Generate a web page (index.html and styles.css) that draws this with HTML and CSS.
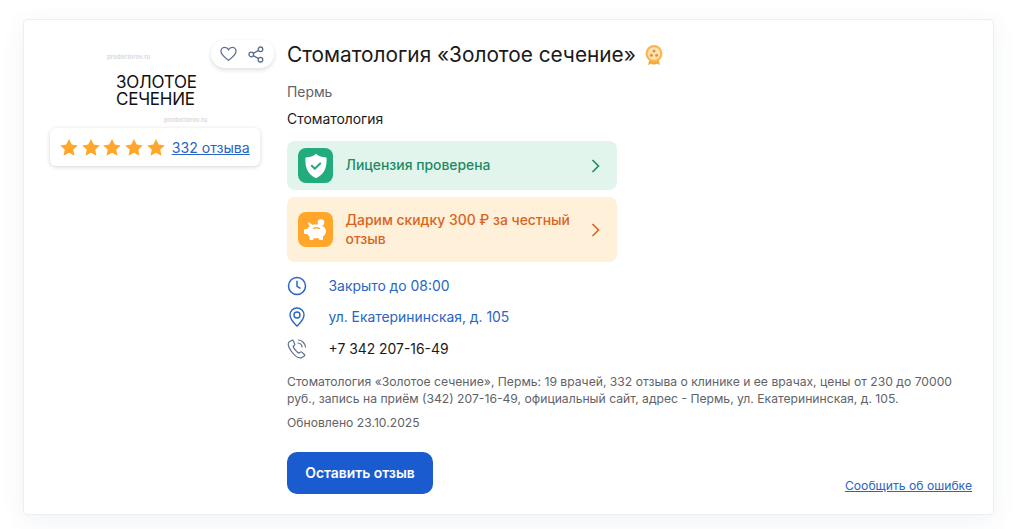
FILE: index.html
```html
<!DOCTYPE html>
<html lang="ru">
<head>
<meta charset="utf-8">
<title>Стоматология «Золотое сечение»</title>
<link rel="stylesheet" href="styles.css">
</head>
<body>
<main class="card">
  <aside class="side">
    <div class="logo">
      <span class="mark mark-top">prodoctorov.ru</span>
      <div class="logo-name">ЗОЛОТОЕ<br>СЕЧЕНИЕ</div>
      <span class="mark mark-bottom">prodoctorov.ru</span>
      <div class="actions">
        <svg width="17" height="16" viewBox="0 0 18 16" fill="none" stroke="#5b6f8f" stroke-width="1.300"><path d="M9 14.600C6.500 12.600 1 9.400 1 5.200 1 2.800 2.800 1 5 1c1.700 0 3.200 .9 4 2.400C9.800 1.900 11.300 1 13 1c2.200 0 4 1.800 4 4.200 0 4.200-5.500 7.400-8 9.400z"/></svg>
        <svg width="16" height="17" viewBox="0 0 16 17" fill="none" stroke="#5b6f8f" stroke-width="1.300"><circle cx="12.500" cy="3.300" r="2.300"/><circle cx="3.300" cy="8.500" r="2.300"/><circle cx="12.500" cy="13.700" r="2.300"/><path d="M5.300 7.400l5.200-3M5.300 9.600l5.200 3"/></svg>
      </div>
    </div>
    <div class="rating">
      <div class="stars">
        <svg width="18" height="17" viewBox="0 0 18 17"><path class="star" d="M9 0l2.700 5.600 6.100.8-4.500 4.200 1.100 6.100L9 13.800l-5.400 2.900 1.100-6.100L.2 6.400l6.100-.8z"/></svg>
        <svg width="18" height="17" viewBox="0 0 18 17"><path class="star" d="M9 0l2.700 5.600 6.100.8-4.500 4.200 1.100 6.100L9 13.800l-5.400 2.900 1.100-6.100L.2 6.400l6.100-.8z"/></svg>
        <svg width="18" height="17" viewBox="0 0 18 17"><path class="star" d="M9 0l2.700 5.600 6.100.8-4.500 4.200 1.100 6.100L9 13.800l-5.400 2.900 1.100-6.100L.2 6.400l6.100-.8z"/></svg>
        <svg width="18" height="17" viewBox="0 0 18 17"><path class="star" d="M9 0l2.700 5.600 6.100.8-4.500 4.200 1.100 6.100L9 13.800l-5.400 2.900 1.100-6.100L.2 6.400l6.100-.8z"/></svg>
        <svg width="18" height="17" viewBox="0 0 18 17"><path class="star" d="M9 0l2.700 5.600 6.100.8-4.500 4.200 1.100 6.100L9 13.800l-5.400 2.900 1.100-6.100L.2 6.400l6.100-.8z"/></svg>
      </div>
      <a class="reviews" href="#">332 отзыва</a>
    </div>
  </aside>
  <section class="info">
    <div class="title-row">
      <h1 class="title">Стоматология «Золотое сечение»</h1>
      <svg width="18" height="22" viewBox="0 0 18 22"><path d="M4.500 15l-1.500 6 3-1.300 3 1 3-1 3 1.300-1.500-6z" fill="#fba936"/><circle cx="9" cy="9.500" r="8.500" fill="#fcb650"/><circle cx="9" cy="9.500" r="6.300" fill="#fde2b8"/><circle cx="9" cy="7" r="1.500" fill="#e9912a"/><circle cx="6.400" cy="11.200" r="1.500" fill="#e9912a"/><circle cx="11.600" cy="11.200" r="1.500" fill="#e9912a"/></svg>
    </div>
    <div class="city">Пермь</div>
    <div class="spec">Стоматология</div>
    <a class="banner banner-green" href="#">
      <span class="badge badge-green">
        <svg width="24" height="26" viewBox="0 0 24 26"><path d="M12 .8c1.500 1.800 5 3.400 10.500 3.700.6 9.500-1.500 16.500-10.500 20.700C3 21 .9 14 1.500 4.500 7 4.200 10.500 2.600 12 .8z" fill="#fff"/><path d="M7.800 12.800l3 3 5.400-5.300" fill="none" stroke="#22ab7c" stroke-width="2" stroke-linecap="round" stroke-linejoin="round"/></svg>
      </span>
      <span class="banner-text">Лицензия проверена</span>
      <svg class="chev" width="9" height="14" viewBox="0 0 9 14" fill="none" stroke="#1c8a65" stroke-width="1.600"><path d="M1.500 1l6 6-6 6"/></svg>
    </a>
    <a class="banner banner-orange" href="#">
      <span class="badge badge-orange">
        <svg width="25" height="22" viewBox="0 0 25 22"><circle cx="18" cy="3.500" r="3.300" fill="#fff"/><path d="M5 3l4.500 2.700c1-.2 2.300-.4 3.500-.4 5.600 0 10 3 10 7 0 2.300-1.300 4-3 5.100V20a1 1 0 0 1-1 1h-2a1 1 0 0 1-1-1v-.8h-5.500v.8a1 1 0 0 1-1 1H7.500a1 1 0 0 1-1-1v-2.500c-1-.7-1.700-1.500-2.300-2.500H2a1 1 0 0 1-1-1v-3a1 1 0 0 1 1-1h2.200c.5-.9 1.200-1.700 2-2.400z" fill="#fff"/><path d="M10.500 9.300c1.900-.7 4-.7 6 0" stroke="#ffa62b" stroke-width="1.400" fill="none" stroke-linecap="round"/></svg>
      </span>
      <span class="banner-text">Дарим скидку 300 ₽ за честный отзыв</span>
      <svg class="chev" width="9" height="14" viewBox="0 0 9 14" fill="none" stroke="#d9641c" stroke-width="1.600"><path d="M1.500 1l6 6-6 6"/></svg>
    </a>
    <ul class="contacts">
      <li class="contact">
        <svg class="c-icon" width="20" height="20" viewBox="0 0 20 20" fill="none" stroke="#2a64c4" stroke-width="1.500" stroke-linecap="round" stroke-linejoin="round"><circle cx="10" cy="10" r="8.500"/><path d="M10 5.300v5l3 1.800"/></svg>
        <a class="c-link" href="#">Закрыто до 08:00</a>
      </li>
      <li class="contact">
        <svg class="c-icon" width="20" height="20" viewBox="0 0 20 20" fill="none" stroke="#2a64c4" stroke-width="1.400"><path d="M10 19c-1.500-1.500-7-6.100-7-11a7 7 0 0 1 14 0c0 4.900-5.500 9.500-7 11z"/><circle cx="10" cy="8" r="3"/></svg>
        <a class="c-link" href="#">ул. Екатерининская, д. 105</a>
      </li>
      <li class="contact">
        <svg class="c-icon" width="20" height="20" viewBox="0 0 20 20" fill="none" stroke="#5b6f8f" stroke-width="1.200" stroke-linecap="round" stroke-linejoin="round"><path d="M4.500 1.500L2 3C.8 4.500 1.300 8 4.500 12.500c3.500 4.700 7.500 7 10 6.300l2.800-1.800c.5-.5.5-1 .1-1.500l-2.600-2.400c-.5-.4-1-.4-1.500 0l-1.300 1c-1.500-.4-5.500-4.800-5.800-6.800l1.200-1.100c.5-.5.500-1 .2-1.500L6.200 1.700c-.5-.5-1.100-.6-1.700-.2z"/><path d="M11 4c2 .2 3.800 1.900 4 4M11.500 1c3.500.3 6.600 3.400 7 7"/></svg>
        <span class="c-phone">+7 342 207-16-49</span>
      </li>
    </ul>
    <p class="desc">Стоматология «Золотое сечение», Пермь: 19 врачей, 332 отзыва о клинике и ее врачах, цены от 230 до 70000 руб., запись на приём (342) 207-16-49, официальный сайт, адрес - Пермь, ул. Екатерининская, д. 105.</p>
    <p class="updated">Обновлено 23.10.2025</p>
    <div class="footer">
      <a class="btn" href="#">Оставить отзыв</a>
      <a class="report" href="#">Сообщить об ошибке</a>
    </div>
  </section>
</main>
</body>
</html>
```
FILE: styles.css
```css
* { box-sizing: border-box; }
html, body { margin: 0; height: 529px; overflow: hidden; }
body {
  background: #fff;
  font-family: Inter, "Noto Sans", sans-serif;
  color: #1a1a1a;
  padding: 19px 30px 0 23px;
}
a { text-decoration: none; }
.card {
  display: flex;
  width: 971px;
  height: 496px;
  background: #fff;
  border: 1px solid #eceef1;
  border-radius: 4px;
  box-shadow: 0 6px 24px rgba(60, 85, 110, .07);
  padding: 20px 21px 20px 26px;
}
.side { width: 210px; margin-right: 27px; flex: none; }
.logo { position: relative; height: 88px; }
.logo-name {
  position: absolute; left: 66px; top: 33.500px;
  font-size: 17px; line-height: 17.500px; letter-spacing: -.25px; color: #111;
  font-weight: 400;
}
.mark { position: absolute; font-size: 6px; line-height: 8px; color: #d5d7da; font-weight: 600; white-space: nowrap; }
.mark-top { left: 57px; top: 13px; }
.mark-bottom { left: 114px; top: 76px; }
.actions {
  position: absolute; left: 161px; top: 0;
  width: 63px; height: 28px;
  display: flex; align-items: center; gap: 11px; padding-left: 9px;
  background: #fff; border-radius: 14px;
  box-shadow: 0 2px 4px rgba(40, 50, 70, .16);
}
.rating {
  display: flex; align-items: center; gap: 7px;
  height: 38px; padding-left: 10px;
  background: #fff; border-radius: 6px;
  box-shadow: 0 1px 4px rgba(40, 50, 70, .2);
}
.stars { display: flex; gap: 3.700px; }
.star { fill: #ffa62b; }
.reviews { font-size: 14.100px; color: #2a64c4; text-decoration: underline; }
.info { flex: 1; min-width: 0; display: flex; flex-direction: column; }
.title-row { display: flex; align-items: center; gap: 9px; height: 30px; flex: none; }
.title { margin: 0; font-size: 20.800px; font-weight: 400; line-height: 30px; color: #1a1a1a; }
.city { margin-top: 12px; font-size: 13.900px; line-height: 20px; color: #5f6368; flex: none; }
.spec { margin-top: 7px; font-size: 13.900px; line-height: 20px; color: #1a1a1a; flex: none; }
.banner {
  display: flex; align-items: center; flex: none;
  width: 330px; padding: 0 17px 0 11px;
  border-radius: 8px; font-size: 13.900px; font-weight: 500; line-height: 19px;
}
.banner-green { height: 49px; margin-top: 12px; background: #e2f5ed; color: #1c8a65; }
.banner-orange { height: 65px; margin-top: 7px; background: #fff0d9; color: #d9641c; }
.badge {
  flex: none; width: 35px; height: 35px; border-radius: 8px;
  display: flex; align-items: center; justify-content: center;
}
.badge-green { background: #22ab7c; }
.badge-orange { background: #ffa62b; }
.banner-text { flex: 1; margin-left: 12.500px; padding-right: 14.500px; }
.chev { flex: none; }
.contacts { list-style: none; margin: 8px 0 0; padding: 0; flex: none; }
.contact { display: flex; align-items: center; height: 31.500px; font-size: 13.900px; }
.c-icon { flex: none; margin-right: 21.500px; }
.c-link { color: #2a64c4; }
.c-phone { color: #1a1a1a; }
.desc { margin: 8px 0 0; font-size: 12.160px; line-height: 17px; color: #5f6368; width: 680px; flex: none; }
.updated { margin: 7px 0 0; font-size: 12.160px; line-height: 17px; color: #5f6368; flex: none; }
.footer { display: flex; justify-content: space-between; align-items: flex-end; margin-top: 21px; flex: none; }
.btn {
  display: flex; align-items: center; justify-content: center;
  width: 146px; height: 42px; border-radius: 10px;
  background: #1a5ccf; color: #fff; font-size: 13.900px; font-weight: 600;
}
.report { font-size: 12.160px; color: #2a64c4; text-decoration: underline; line-height: 17px; }
```
